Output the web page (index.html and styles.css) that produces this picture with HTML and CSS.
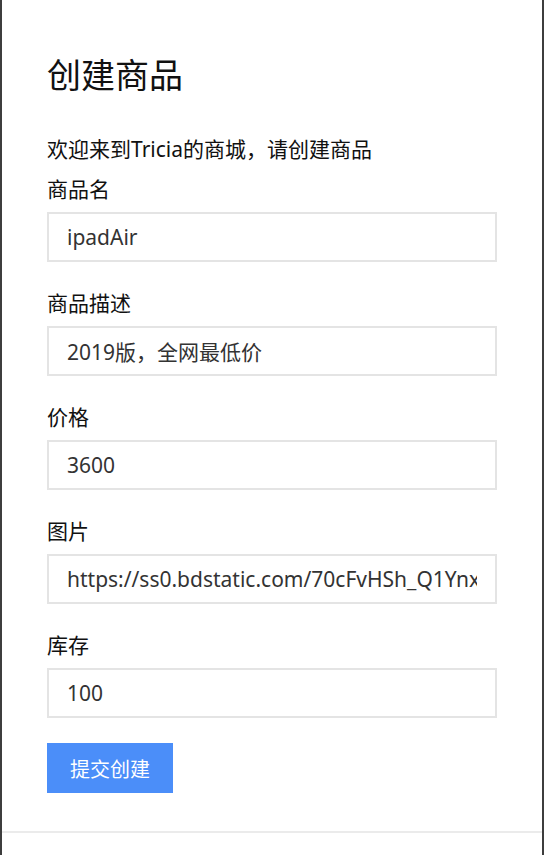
FILE: index.html
```html
<!DOCTYPE html>
<html lang="zh-CN">
<head>
<meta charset="utf-8">
<title>创建商品</title>
<link rel="stylesheet" href="styles.css">
</head>
<body>
<div class="page">
  <h1 class="title">创建商品</h1>
  <p class="welcome">欢迎来到Tricia的商城，请创建商品</p>
  <form class="form">
    <div class="field">
      <label class="label">商品名</label>
      <input class="input" type="text" value="ipadAir">
    </div>
    <div class="field">
      <label class="label">商品描述</label>
      <input class="input" type="text" value="2019版，全网最低价">
    </div>
    <div class="field">
      <label class="label">价格</label>
      <input class="input" type="text" value="3600">
    </div>
    <div class="field">
      <label class="label">图片</label>
      <input class="input" type="text" value="https://ss0.bdstatic.com/70cFvHSh_Q1YnxGkpoWK1HF6hhy/it/u=123">
    </div>
    <div class="field">
      <label class="label">库存</label>
      <input class="input" type="text" value="100">
    </div>
    <button class="submit" type="button">提交创建</button>
  </form>
</div>
</body>
</html>
```

FILE: styles.css
```css
* { box-sizing: border-box; }
html, body { margin: 0; padding: 0; background: #fff; }
body {
  min-height: 100vh;
  border-left: 2px solid #3d3d3d;
  border-right: 2px solid #3d3d3d;
  font-family: "Noto Sans", "Noto Sans CJK SC", sans-serif;
  color: #111;
}
.page {
  height: 833px;
  padding: 55px 45px 0;
  border-bottom: 2px solid #ebebeb;
}
.title {
  margin: 0;
  font-size: 34px;
  line-height: 40px;
  font-weight: 400;
  color: #111;
}
.welcome {
  margin: 39px 0 0;
  font-size: 21px;
  line-height: 30px;
}
.form {
  margin-top: 10px;
  display: flex;
  flex-direction: column;
  align-items: flex-start;
  gap: 26px;
}
.field {
  display: flex;
  flex-direction: column;
  gap: 7px;
  width: 100%;
}
.label {
  font-size: 21px;
  line-height: 31px;
}
.input {
  width: 450px;
  height: 50px;
  margin: 0;
  padding: 0 18px;
  border: 2px solid #e4e4e4;
  border-radius: 0;
  outline: none;
  background: #fff;
  font-family: "Noto Sans", "Noto Sans CJK SC", sans-serif;
  font-size: 21px;
  color: #333;
}
.submit {
  margin-top: -1px;
  width: 126px;
  height: 50px;
  padding: 0;
  border: none;
  border-radius: 0;
  background: #4b8ef9;
  color: #fff;
  font-family: "Noto Sans", "Noto Sans CJK SC", sans-serif;
  font-size: 20px;
}
```
